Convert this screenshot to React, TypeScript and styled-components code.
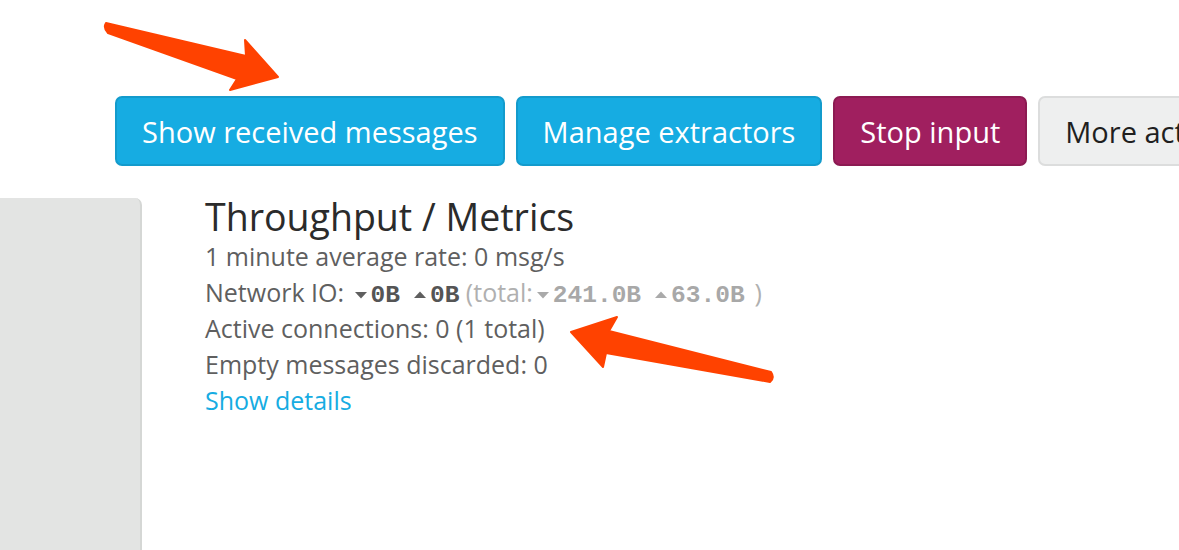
import React from 'react';
import styled, { createGlobalStyle } from 'styled-components';

const GlobalStyle = createGlobalStyle`
  html, body {
    margin: 0;
    padding: 0;
    background: #fff;
  }
  body {
    font-family: "Open Sans", "Liberation Sans", sans-serif;
    color: #666;
  }
`;

const Page = styled.div`
  position: relative;
  width: 1179px;
  height: 550px;
  overflow: hidden;
  padding-top: 96px;
  box-sizing: border-box;
`;

const Toolbar = styled.div`
  display: flex;
  gap: 11px;
  margin-left: 115px;
  white-space: nowrap;
`;

const variants = {
  info: { bg: '#16ace2', border: '#139bcc', color: '#fff' },
  primary: { bg: '#a01f5f', border: '#8c1a52', color: '#fff' },
  default: { bg: '#eeefef', border: '#dcdddd', color: '#1f1f1f' },
};

const Button = styled.button<{ $variant: keyof typeof variants }>`
  flex: none;
  height: 70px;
  padding: 0 25px;
  border-radius: 7px;
  border: 2px solid ${(p) => variants[p.$variant].border};
  background: ${(p) => variants[p.$variant].bg};
  color: ${(p) => variants[p.$variant].color};
  font-family: "Open Sans", sans-serif;
  font-size: 29px;
  line-height: 1;
`;

const Body = styled.div`
  display: flex;
  margin-top: 32px;
`;

const Sidebar = styled.div`
  flex: none;
  width: 140px;
  height: 360px;
  background: #e3e4e3;
  border-right: 2px solid #d5d7d5;
  border-top-right-radius: 7px;
`;

const Metrics = styled.div`
  margin-left: 63px;
`;

const Heading = styled.h2`
  margin: 0 0 2px;
  font-size: 37.5px;
  font-weight: 400;
  line-height: 38px;
  color: #2b2b2b;
`;

const Line = styled.div`
  height: 36px;
  font-size: 25px;
  line-height: 36px;
  color: #5f5f5f;
  white-space: nowrap;
`;

const Mono = styled.span<{ $muted?: boolean }>`
  font-family: "Liberation Mono", "DejaVu Sans Mono", monospace;
  font-weight: 700;
  font-size: 24.5px;
  color: ${(p) => (p.$muted ? '#a8a8a8' : '#555')};
`;

const Gap = styled.span`
  display: inline-block;
  width: 10px;
`;

const Muted = styled.span`
  color: #b0b0b0;
`;

const Link = styled.a`
  color: #16ace2;
  text-decoration: none;
`;

const CaretIcon = styled.svg`
  margin: 0 3px 0 3px;
  vertical-align: 2px;
`;

const Caret = ({ up, muted }: { up?: boolean; muted?: boolean }) => (
  <CaretIcon width="14" height="10" viewBox="0 0 14 10">
    <polygon
      points={up ? '1,8 13,8 7,1.5' : '1,2 13,2 7,8.5'}
      fill={muted ? '#aaa' : '#5f5f5f'}
    />
  </CaretIcon>
);

const Overlay = styled.svg`
  position: absolute;
  left: 0;
  top: 0;
  pointer-events: none;
`;

export default function App() {
  return (
    <Page>
      <GlobalStyle />
      <Toolbar>
        <Button $variant="info">Show received messages</Button>
        <Button $variant="info">Manage extractors</Button>
        <Button $variant="primary">Stop input</Button>
        <Button $variant="default">More actions</Button>
      </Toolbar>
      <Body>
        <Sidebar />
        <Metrics>
          <Heading>Throughput / Metrics</Heading>
          <Line>1 minute average rate: 0 msg/s</Line>
          <Line>
            Network IO: <Caret />
            <Mono>0B</Mono>
            <Gap />
            <Caret up />
            <Mono>0B</Mono>{' '}
            <Muted>
              (total:
              <Caret muted />
              <Mono $muted>241.0B</Mono>
              <Gap />
              <Caret up muted />
              <Mono $muted>63.0B</Mono>
              <Gap />)
            </Muted>
          </Line>
          <Line>Active connections: 0 (1 total)</Line>
          <Line>Empty messages discarded: 0</Line>
          <Line>
            <Link href="#">Show details</Link>
          </Line>
        </Metrics>
      </Body>
      <Overlay width="1179" height="550" viewBox="0 0 1179 550">
        <g fill="#ff4200" stroke="#ff4200" strokeLinejoin="round" strokeWidth="2">
          <path d="M106 23 Q103 28 108 33 L237 79 L230 90 L278 77 L245 40 L246 56 Z" />
          <path d="M771 372 Q775 378 770 382 L606 353 L603 367 L571 332 L617 317 L609 331 Z" />
        </g>
      </Overlay>
    </Page>
  );
}
